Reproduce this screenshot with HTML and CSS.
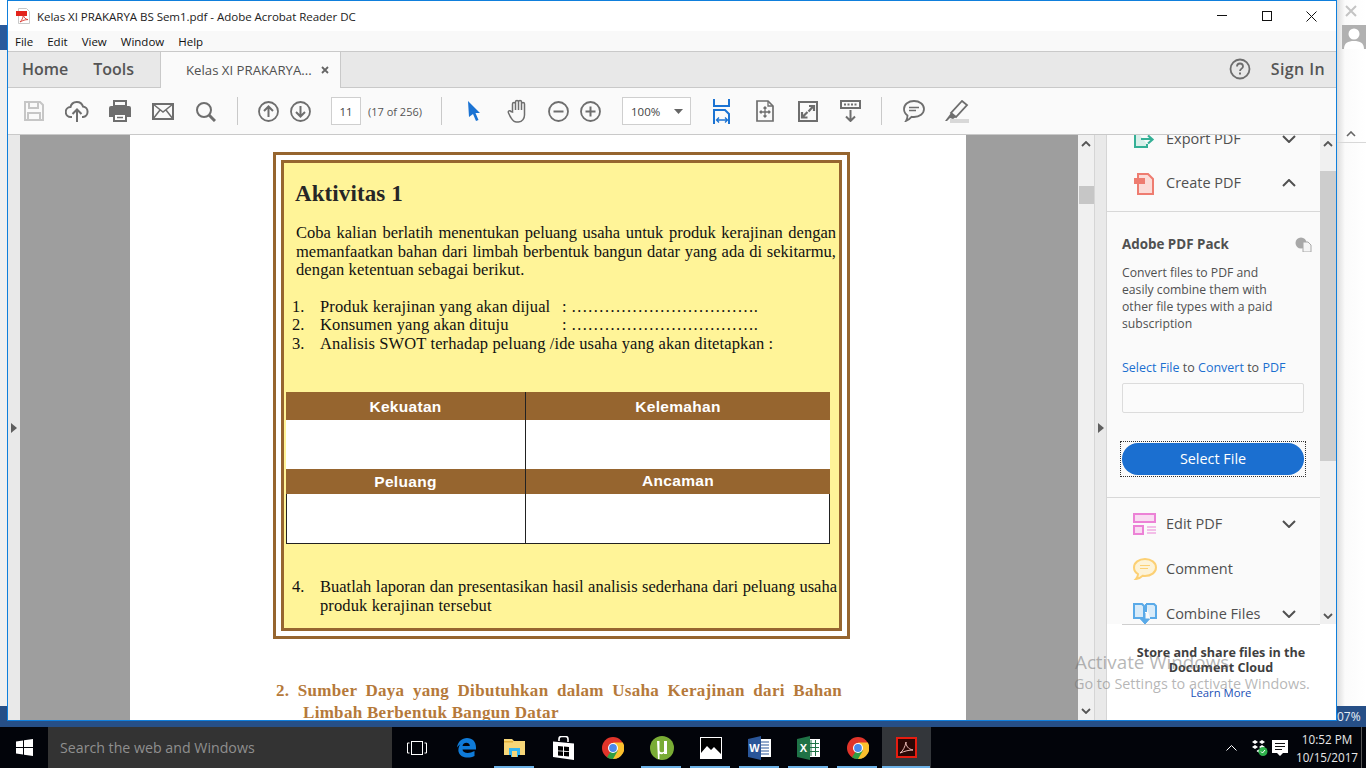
FILE: index.html
```html
<!DOCTYPE html>
<html lang="id">
<head>
<meta charset="utf-8">
<title>Kelas XI PRAKARYA BS Sem1.pdf - Adobe Acrobat Reader DC</title>
<link rel="stylesheet" href="styles.css">
</head>
<body>
<div class="screen">
  <div class="desktop">
    <div class="bg-left"><div class="bg-left-white"></div><div class="bg-left-blue"></div><div class="bg-left-gray"></div></div>
    <div class="bg-right">
      <svg class="bg-x" width="12" height="12" viewBox="0 0 12 12"><path d="M1 1l10 10M11 1L1 11" stroke="#c4c4c4" stroke-width="2"/></svg>
      <svg class="bg-avatar" width="24" height="24" viewBox="0 0 24 24"><rect width="24" height="24" fill="#b1b1b1"/><circle cx="12" cy="9" r="5.5" fill="#fff"/><path d="M2 24c0-6 4-8 10-8s10 2 10 8z" fill="#fff"/></svg>
      <svg class="bg-chev" width="10" height="6" viewBox="0 0 10 6"><path d="M1 5l4-4 4 4" fill="none" stroke="#666" stroke-width="1.6"/></svg>
      <div class="bg-line"></div>
    </div>
    <div class="bg-percent">07%</div>

    <div class="window">
      <div class="titlebar">
        <svg class="pdf-ico" width="16" height="16" viewBox="0 0 16 16"><path d="M2.500 .5h8l3 3v12h-11z" fill="#fff" stroke="#c9c9c9"/><rect x="0" y="3" width="11" height="5" fill="#e3231b"/><path d="M4 14c2-2 3-4 3.300-7 .8 3 2 4 4.700 4.600-3 0-5 .8-8 2.400z" fill="none" stroke="#d8362d" stroke-width=".9"/></svg>
        <span class="title-text">Kelas XI PRAKARYA BS Sem1.pdf - Adobe Acrobat Reader DC</span>
        <div class="win-btns">
          <svg width="10" height="2" viewBox="0 0 10 2"><rect width="10" height="1" fill="#111"/></svg>
          <svg width="10" height="10" viewBox="0 0 10 10"><rect x=".5" y=".5" width="9" height="9" fill="none" stroke="#111"/></svg>
          <svg width="11" height="11" viewBox="0 0 11 11"><path d="M.5 .5l10 10M10.500 .5l-10 10" stroke="#111"/></svg>
        </div>
      </div>
      <div class="menubar"><span>File</span><span>Edit</span><span>View</span><span>Window</span><span>Help</span></div>
      <div class="tabbar">
        <div class="tab-main"><span>Home</span><span>Tools</span></div>
        <div class="tab-doc"><span>Kelas XI PRAKARYA...</span>
          <svg width="8" height="8" viewBox="0 0 8 8"><path d="M1 1l6 6M7 1L1 7" stroke="#666" stroke-width="1.800"/></svg>
        </div>
        <div class="tab-right">
          <svg width="22" height="22" viewBox="0 0 22 22"><circle cx="11" cy="11" r="9.500" fill="none" stroke="#6e6e6e" stroke-width="1.800"/><path d="M8 8.500c0-4 6-4 6 0 0 2-3 2.300-3 4.500" fill="none" stroke="#6e6e6e" stroke-width="1.800"/><rect x="10" y="14.500" width="2" height="2" fill="#6e6e6e"/></svg>
          <span>Sign In</span>
        </div>
      </div>
      <div class="toolbar">
        <div class="tb"><svg width="22" height="22" viewBox="0 0 22 22"><path d="M2 2h15l3 3v15H2z" fill="none" stroke="#c6c6c6" stroke-width="2"/><path d="M6 2v6h9V2M5 20v-7h12v7" fill="none" stroke="#c6c6c6" stroke-width="2"/></svg></div>
        <div class="tb"><svg width="24" height="24" viewBox="0 0 24 24"><path d="M7 18H6a5 5 0 0 1-.5-10A6.500 6.500 0 0 1 18 7.500a5.300 5.300 0 0 1 0 10.500h-1" fill="none" stroke="#6e6e6e" stroke-width="2"/><path d="M12 23V11M7.500 15l4.500-4.500 4.500 4.500" fill="none" stroke="#6e6e6e" stroke-width="2"/></svg></div>
        <div class="tb"><svg width="24" height="22" viewBox="0 0 24 22"><path d="M6 1h12v5H6z" fill="none" stroke="#6e6e6e" stroke-width="2"/><path d="M3 6h18a2 2 0 0 1 2 2v9h-4v-4H5v4H1V8a2 2 0 0 1 2-2z" fill="#6e6e6e"/><path d="M6 14h12v7H6z" fill="#fff" stroke="#6e6e6e" stroke-width="2"/><path d="M9 17.500h6" stroke="#6e6e6e" stroke-width="1.500"/></svg></div>
        <div class="tb"><svg width="22" height="17" viewBox="0 0 22 17"><rect x="1" y="1" width="20" height="15" fill="none" stroke="#6e6e6e" stroke-width="2"/><path d="M1 1l10 8 10-8M1 16l7-9M21 16l-7-9" fill="none" stroke="#6e6e6e" stroke-width="1.500"/></svg></div>
        <div class="tb"><svg width="21" height="21" viewBox="0 0 21 21"><circle cx="9" cy="9" r="7" fill="none" stroke="#6e6e6e" stroke-width="2"/><path d="M14 14l6 6" stroke="#6e6e6e" stroke-width="3"/></svg></div>
        <div class="tb-sep sep-a"></div>
        <div class="tb-s first-nav"><svg width="21" height="21" viewBox="0 0 21 21"><circle cx="10.500" cy="10.500" r="9.500" fill="none" stroke="#6e6e6e" stroke-width="1.800"/><path d="M10.500 16V5.500M6 10l4.500-4.500L15 10" fill="none" stroke="#6e6e6e" stroke-width="2"/></svg></div>
        <div class="tb-s"><svg width="21" height="21" viewBox="0 0 21 21"><circle cx="10.500" cy="10.500" r="9.500" fill="none" stroke="#6e6e6e" stroke-width="1.800"/><path d="M10.500 5v10.500M6 11l4.500 4.500L15 11" fill="none" stroke="#6e6e6e" stroke-width="2"/></svg></div>
        <div class="page-input">11</div>
        <span class="page-of">(17 of 256)</span>
        <div class="tb-sep sep-b"></div>
        <div class="tb cursor"><svg width="14" height="20" viewBox="0 0 14 20"><path d="M1 0l12 12H8.500l3 7-2.500 1-3-7L2 16z" fill="#1b73d3"/></svg></div>
        <div class="tb hand"><svg width="22" height="24" viewBox="0 0 22 24"><path d="M5.500 13V5a1.500 1.500 0 0 1 3 0v6-8a1.500 1.500 0 0 1 3 0v8-8a1.500 1.500 0 0 1 3 0v8-6a1.500 1.500 0 0 1 3 0v11c0 3-2 7-6 7h-2c-3 0-4-2-6-5l-2-4c-1-2 1.500-3 2.500-1.500z" fill="none" stroke="#6e6e6e" stroke-width="1.500"/></svg></div>
        <div class="tb-s zoom-out"><svg width="21" height="21" viewBox="0 0 21 21"><circle cx="10.500" cy="10.500" r="9.500" fill="none" stroke="#6e6e6e" stroke-width="1.800"/><path d="M5.500 10.500h10" stroke="#6e6e6e" stroke-width="2"/></svg></div>
        <div class="tb-s"><svg width="21" height="21" viewBox="0 0 21 21"><circle cx="10.500" cy="10.500" r="9.500" fill="none" stroke="#6e6e6e" stroke-width="1.800"/><path d="M5.500 10.500h10M10.500 5.500v10" stroke="#6e6e6e" stroke-width="2"/></svg></div>
        <div class="zoom-select"><span>100%</span><svg width="9" height="5" viewBox="0 0 9 5"><path d="M0 0h9L4.500 5z" fill="#666"/></svg></div>
        <div class="tb fit"><svg width="18" height="25" viewBox="0 0 18 25"><path d="M1 0v7h15V0" fill="none" stroke="#1b73d3" stroke-width="2"/><path d="M1 25V11h11l4 4v10" fill="none" stroke="#1b73d3" stroke-width="2"/><path d="M3.500 21h11M6 18.500L3.500 21 6 23.500M12 18.500l2.500 2.500-2.500 2.500" fill="none" stroke="#1b73d3" stroke-width="1.300"/></svg></div>
        <div class="tb"><svg width="18" height="22" viewBox="0 0 18 22"><path d="M1 1h11l5 5v15H1z" fill="none" stroke="#6e6e6e" stroke-width="1.700"/><path d="M12 1v5h5" fill="none" stroke="#6e6e6e" stroke-width="1.300"/><path d="M9 7v10M4 12h10M7.500 8.500L9 7l1.500 1.500M7.500 15.500L9 17l1.500-1.500M5.500 10.500L4 12l1.500 1.500M12.500 10.500L14 12l-1.500 1.500" fill="none" stroke="#6e6e6e" stroke-width="1.300"/></svg></div>
        <div class="tb"><svg width="20" height="21" viewBox="0 0 20 21"><rect x="1" y="1" width="18" height="19" fill="none" stroke="#6e6e6e" stroke-width="2"/><path d="M10.500 10.500l4.500-5M11 5h5v5M9.500 11l-5 5M4 11v5.500h5.500" fill="none" stroke="#6e6e6e" stroke-width="2.200"/></svg></div>
        <div class="tb"><svg width="21" height="22" viewBox="0 0 21 22"><rect x="1" y="1" width="19" height="7" fill="none" stroke="#6e6e6e" stroke-width="2"/><path d="M4 4.500h13" stroke="#6e6e6e" stroke-width="2" stroke-dasharray="2 1.500"/><path d="M10.500 10v11M6 16.500l4.500 4.500 4.500-4.500" fill="none" stroke="#6e6e6e" stroke-width="2"/></svg></div>
        <div class="tb-sep sep-c"></div>
        <div class="tb comment"><svg width="22" height="22" viewBox="0 0 22 22"><path d="M11 1c5.500 0 10 3.400 10 8s-4.500 8-10 8c-1 0-1.500 0-2.500-.2C7 18.500 5.500 20 3 21c1-1.500 1.500-3 1.500-5.500C2.300 14 1 11.700 1 9c0-4.600 4.500-8 10-8z" fill="none" stroke="#6e6e6e" stroke-width="1.800"/><path d="M6 7.500h10M6 10.500h7" stroke="#6e6e6e" stroke-width="1.500"/></svg></div>
        <div class="tb"><svg width="24" height="23" viewBox="0 0 24 23"><path d="M17 1l5 4-11 12-5-4z" fill="none" stroke="#6e6e6e" stroke-width="1.800"/><path d="M6 13l5 4-3 2-3-1-3 3h-2l3-4z" fill="#6e6e6e"/><rect x="5" y="19" width="19" height="4" fill="#d8d8d8"/></svg></div>
      </div>

      <div class="content">
        <div class="nav-rail"><svg width="6" height="10" viewBox="0 0 6 10"><path d="M0 0l6 5-6 5z" fill="#5f5f5f"/></svg></div>
        <div class="doc-area">
          <div class="page">
            <div class="box-outer"><div class="box-inner">
              <h2 class="act-title">Aktivitas 1</h2>
              <div class="act-text">
                <p class="just tight">Coba kalian berlatih menentukan peluang usaha untuk produk kerajinan dengan</p>
                <p class="just tight">memanfaatkan bahan dari limbah berbentuk bangun datar yang ada di sekitarmu,</p>
                <p>dengan ketentuan sebagai berikut.</p>
              </div>
              <div class="act-list">
                <span>1.</span><span>Produk kerajinan yang akan dijual</span><span>: …………………………….</span>
                <span>2.</span><span>Konsumen yang akan dituju</span><span>: …………………………….</span>
                <span>3.</span><span class="span2">Analisis SWOT terhadap peluang /ide usaha yang akan ditetapkan :</span>
              </div>
              <div class="swot">
                <div class="sw-head sw-h1 sw-left">Kekuatan</div><div class="sw-head sw-h1">Kelemahan</div>
                <div class="sw-cell sw-c1 sw-left"></div><div class="sw-cell sw-c1"></div>
                <div class="sw-head sw-h2 sw-left sw-low">Peluang</div><div class="sw-head sw-h2">Ancaman</div>
                <div class="sw-cell sw-c2 sw-left"></div><div class="sw-cell sw-c2"></div>
              </div>
              <div class="act-list2">
                <span>4.</span><div><p class="just tight">Buatlah laporan dan presentasikan hasil analisis sederhana dari peluang usaha</p><p>produk kerajinan tersebut</p></div>
              </div>
            </div></div>
            <div class="section-head">
              <p class="just">2. Sumber Daya yang Dibutuhkan dalam Usaha Kerajinan dari Bahan</p>
              <p class="sec-2">Limbah Berbentuk Bangun Datar</p>
            </div>
          </div>
        </div>
        <div class="scroll-doc">
          <svg class="chev" width="10" height="6" viewBox="0 0 10 6"><path d="M1 5l4-4 4 4" fill="none" stroke="#555" stroke-width="1.800"/></svg>
          <div class="sd-thumb"></div>
          <svg class="chev sd-down" width="10" height="6" viewBox="0 0 10 6"><path d="M1 1l4 4 4-4" fill="none" stroke="#555" stroke-width="1.800"/></svg>
        </div>
        <div class="panel-rail"><svg width="6" height="10" viewBox="0 0 6 10"><path d="M0 0l6 5-6 5z" fill="#5f5f5f"/></svg></div>
        <div class="panel">
          <div class="panel-top">
            <div class="panel-scrollarea">
              <div class="panel-list">
                <div class="tool-row tool-export">
                  <svg width="22" height="22" viewBox="0 0 22 22"><path d="M2 1h12v6M2 1v18h12v-3" fill="#d9f0ea" stroke="#35b096" stroke-width="2"/><path d="M8 11h10M15 7.500l4.500 4-4.500 4" fill="none" stroke="#35b096" stroke-width="2.200"/></svg>
                  <span>Export PDF</span>
                  <svg class="caret" width="14" height="8" viewBox="0 0 14 8"><path d="M1 1l6 6 6-6" fill="none" stroke="#505050" stroke-width="2"/></svg>
                </div>
                <div class="tool-row tool-create">
                  <svg width="22" height="22" viewBox="0 0 22 22"><path d="M5 1h10l5 5v15H5z" fill="#fbdcd8" stroke="#ee7c70" stroke-width="2"/><rect x="1" y="5" width="11" height="6" fill="#ee7c70"/></svg>
                  <span>Create PDF</span>
                  <svg class="caret" width="14" height="8" viewBox="0 0 14 8"><path d="M1 7l6-6 6 6" fill="none" stroke="#505050" stroke-width="2"/></svg>
                </div>
                <div class="pack">
                  <div class="pack-head"><b>Adobe PDF Pack</b>
                    <svg width="17" height="15" viewBox="0 0 17 15"><circle cx="6" cy="6" r="5.500" fill="#a8a8a8"/><path d="M8 5h5l3 3v7H8z" fill="#f5f5f5" stroke="#a8a8a8"/></svg>
                  </div>
                  <p class="pack-text">Convert files to PDF and easily combine them with other file types with a paid subscription</p>
                  <p class="pack-select"><span class="lnk">Select File</span> to <span class="lnk">Convert</span> to <span class="lnk">PDF</span></p>
                  <div class="pack-input"></div>
                  <div class="focus-ring"><div class="select-btn">Select File</div></div>
                </div>
                <div class="tool-row tool-edit">
                  <svg width="24" height="22" viewBox="0 0 24 22"><rect x="1" y="1" width="21" height="8" fill="#f9dcf2" stroke="#ec82d6" stroke-width="2"/><rect x="1" y="13" width="9" height="8" fill="#f9dcf2" stroke="#ec82d6" stroke-width="2"/><path d="M14 14h9M14 17h9M14 20h9" stroke="#ec82d6" stroke-width="1.200"/></svg>
                  <span>Edit PDF</span>
                  <svg class="caret" width="14" height="8" viewBox="0 0 14 8"><path d="M1 1l6 6 6-6" fill="none" stroke="#505050" stroke-width="2"/></svg>
                </div>
                <div class="tool-row">
                  <svg width="24" height="22" viewBox="0 0 24 22"><path d="M12 1c6 0 11 3.400 11 8.500S18 18 12 18c-1 0-1.800 0-2.500-.2C8 19.500 6 20.500 3 21c1.500-1.500 2-3 2-5C2.500 14.500 1 12 1 9.500 1 4.400 6 1 12 1z" fill="#fdf3d8" stroke="#fcd074" stroke-width="2"/><path d="M7 7.500h10M7 10.500h8" stroke="#fcd074" stroke-width="1.200"/></svg>
                  <span>Comment</span>
                </div>
                <div class="tool-row">
                  <svg width="24" height="24" viewBox="0 0 24 24"><path d="M1 2h8l2 2v12H1zM13 2h8l2 2v12h-6M13 2v8" fill="#d8ebf9" stroke="#5aaae8" stroke-width="2"/><path d="M12 11v8M7.500 17l4.500 5 4.500-5z" fill="#5aaae8" stroke="#5aaae8"/></svg>
                  <span>Combine Files</span>
                  <svg class="caret" width="14" height="8" viewBox="0 0 14 8"><path d="M1 1l6 6 6-6" fill="none" stroke="#505050" stroke-width="2"/></svg>
                </div>
              </div>
            </div>
            <div class="scroll-panel">
              <svg class="chev" width="10" height="6" viewBox="0 0 10 6"><path d="M1 5l4-4 4 4" fill="none" stroke="#555" stroke-width="1.800"/></svg>
              <div class="sp-thumb"></div>
              <svg class="chev sp-down" width="10" height="6" viewBox="0 0 10 6"><path d="M1 1l4 4 4-4" fill="none" stroke="#555" stroke-width="1.800"/></svg>
            </div>
          </div>
          <div class="cloud">
            <b>Store and share files in the<br>Document Cloud</b>
            <span class="learn">Learn More</span>
          </div>
        </div>
      </div>
    </div>

    <div class="watermark"><div class="wm-1">Activate Windows</div><div class="wm-2">Go to Settings to activate Windows.</div></div>
  </div>

  <div class="taskbar">
    <div class="start"><svg width="17" height="17" viewBox="0 0 17 17"><path d="M0 2.400l7-1v6.600H0zM8 1.200L17 0v8H8zM0 9h7v6.600l-7-1zM8 9h9v8l-9-1.200z" fill="#fff"/></svg></div>
    <div class="search">Search the web and Windows</div>
    <div class="task-cell"><svg width="20" height="14" viewBox="0 0 20 14"><rect x="4.500" y=".5" width="11" height="13" fill="none" stroke="#fff"/><path d="M2.500 2H.5v10h2M17.500 2h2v10h-2" fill="none" stroke="#fff"/></svg></div>
    <div class="task-cell"><svg width="20" height="20" viewBox="0 0 20 20"><path d="M1 9.500C2 3.500 6 0 11 0c5.500 0 9 3.700 9 9.500v2H6.500c.3 3.500 6 4.800 12 1.500v5c-6 3-14.500 2-16-4.500C2 11 3 8 4.500 6c-1 1-2.500 2-3.500 3.500zM6.500 8h7.300c0-4-6.500-4.500-7.300 0z" fill="#0f7bd8"/></svg></div>
    <div class="task-cell on-part"><svg width="21" height="19" viewBox="0 0 21 19"><path d="M0 1h8l2 2h11v14H0z" fill="#f6d678"/><rect x="0" y="3" width="9" height="1.500" fill="#e2b23e"/><path d="M5 10h11v7h-2v2H7v-2H5z" fill="#33b4f0"/><rect x="8" y="13" width="5" height="6" fill="#f6d678"/></svg></div>
    <div class="task-cell"><svg width="21" height="24" viewBox="0 0 21 24"><path d="M0 5.500L21 7.500V24L0 21z" fill="#fff"/><path d="M6 5V3a2.500 2.500 0 0 1 2.500-2.500h4A2.500 2.500 0 0 1 15 3v3" fill="none" stroke="#fff" stroke-width="1.600"/><path d="M5 10l5 .4v4.300l-5-.3zM11 10.500l5 .5v4.200l-5-.4zM5 15.300l5 .3V20l-5-.5zM11 15.700l5 .4v4.400l-5-.5z" fill="#000"/></svg></div>
    <div class="task-cell"><svg width="22" height="22" viewBox="0 0 22 22"><circle cx="11" cy="11" r="11" fill="#e0342a"/><path d="M11 11L20.500 16.500A11 11 0 0 1 5 20.300z" fill="#2f9e44"/><path d="M11 5.500h9.800A11 11 0 0 1 11 22l4.800-8.200z" fill="#fbc02d"/><circle cx="11" cy="11" r="5" fill="#fff"/><circle cx="11" cy="11" r="3.900" fill="#4a88ea"/></svg></div>
    <div class="task-cell on"><svg width="24" height="24" viewBox="0 0 24 24"><circle cx="12" cy="12" r="12" fill="#79ac35"/><path d="M7 5h2.500v9c0 2.500 2.500 3 4.500 1.500V5h3v13h-3v-1c-1.500 1.300-3 1.500-4.500.7V23H8z" fill="#fff"/></svg></div>
    <div class="task-cell on"><svg width="22" height="22" viewBox="0 0 22 22"><rect width="22" height="22" fill="#fff"/><rect x="1" y="1" width="20" height="20" fill="#000"/><path d="M1 21v-5l6-7 4 4 3-3 7 7v4z" fill="#fff"/><rect y="21" width="22" height="1" fill="#fff"/></svg></div>
    <div class="task-cell on"><svg width="23" height="24" viewBox="0 0 23 24"><rect x="9" y="3" width="14" height="18" fill="#fff"/><path d="M13 6h8M13 9h8M13 12h8M13 15h8M13 18h8" stroke="#2a5699" stroke-width="1.200"/><path d="M0 3l13-3v24L0 21z" fill="#2a5699"/><text x="6.500" y="16" class="ti-letter">W</text></svg></div>
    <div class="task-cell on"><svg width="23" height="24" viewBox="0 0 23 24"><rect x="9" y="3" width="14" height="18" fill="#fff"/><path d="M14 4v16M18.500 4v16M11 7.500h11M11 11.500h11M11 15.500h11" stroke="#1f7246" stroke-width="1"/><path d="M0 3l13-3v24L0 21z" fill="#1f7246"/><text x="6.500" y="16" class="ti-letter">X</text></svg></div>
    <div class="task-cell on"><svg width="22" height="22" viewBox="0 0 22 22"><circle cx="11" cy="11" r="11" fill="#e0342a"/><path d="M11 11L20.500 16.500A11 11 0 0 1 5 20.300z" fill="#2f9e44"/><path d="M11 5.500h9.800A11 11 0 0 1 11 22l4.800-8.200z" fill="#fbc02d"/><circle cx="11" cy="11" r="5" fill="#fff"/><circle cx="11" cy="11" r="3.900" fill="#4a88ea"/></svg></div>
    <div class="task-cell active"><svg width="21" height="21" viewBox="0 0 21 21"><rect x="1" y="1" width="19" height="19" fill="#2a0705" stroke="#e61c10" stroke-width="2"/><path d="M4 16c3-2 5-6 6-11 0 4 2 7 7 8-4 0-8 1-13 3z" fill="none" stroke="#e9b9b4" stroke-width="1"/></svg></div>
    <div class="tray">
      <svg width="11" height="6" viewBox="0 0 11 6"><path d="M.5 5.500l5-5 5 5" fill="none" stroke="#fff"/></svg>
      <svg class="tray-box" width="16" height="16" viewBox="0 0 16 16"><path d="M3 0l3 2-3 2-3-2zM10 0l3 2-3 2-3-2zM3 5l3 2-3 2-3-2zM10 5l3 2-3 2-3-2zM6.500 9.500l2 1.500-2 1.500-2-1.500z" fill="#fff"/><circle cx="11" cy="11.500" r="4.500" fill="#2eb14b"/><path d="M9 11.500l1.500 1.500 2.500-3" fill="none" stroke="#fff"/></svg>
      <svg class="tray-msg" width="16" height="16" viewBox="0 0 16 16"><path d="M0 0h16v13h-5l-3 3-3-3H0z" fill="#fff"/><path d="M3 3.500h10M3 6.500h10M3 9.500h7" stroke="#111"/></svg>
      <div class="clock"><span>10:52 PM</span><span>10/15/2017</span></div>
      <div class="show-desktop"></div>
    </div>
  </div>
</div>
</body>
</html>
```
FILE: styles.css
```css
* { box-sizing: border-box; }
html, body { margin: 0; padding: 0; }
body { width: 1366px; height: 768px; overflow: hidden; background: #fff; font-family: "Open Sans", "Noto Sans", sans-serif; }
p, h2 { margin: 0; }
svg { display: block; flex: none; }

.screen { display: grid; grid-template-rows: 727px 41px; width: 1366px; height: 768px; }
.desktop { position: relative; background: #264f87; overflow: hidden; }

.bg-left { position: absolute; left: 0; top: 0; width: 7px; height: 706px; display: flex; flex-direction: column; }
.bg-left-white { height: 25px; background: #fff; }
.bg-left-blue { height: 25px; background: #2a5a9c; }
.bg-left-gray { flex: 1; background: #f0f0f0; }
.bg-right { position: absolute; left: 1337px; top: 0; width: 29px; height: 706px; background: linear-gradient(90deg, #dcdcdc, #fbfbfb 8px, #fff); }
.bg-x { position: absolute; left: 8px; top: 5px; }
.bg-avatar { position: absolute; left: 5px; top: 25px; }
.bg-chev { position: absolute; left: 9px; top: 131px; }
.bg-line { position: absolute; left: 0; right: 0; top: 142px; height: 1px; background: #d8d8d8; }
.bg-percent { position: absolute; left: 1337px; top: 710px; font-size: 12px; line-height: 14px; color: #e8eef6; }

.window { position: absolute; left: 7px; top: 0; width: 1330px; height: 721px; border: 1px solid #0f7fdc; background: #fff; display: flex; flex-direction: column; overflow: hidden; }

.titlebar { height: 30px; flex: none; display: flex; align-items: center; padding-left: 8px; background: #fff; }
.pdf-ico { margin-right: 5px; }
.title-text { font-size: 11.55px; color: #222; letter-spacing: -.05px; white-space: nowrap; }
.win-btns { margin-left: auto; display: grid; grid-template-columns: repeat(3, 45px); justify-items: center; align-items: center; margin-right: 2px; }

.menubar { height: 20px; flex: none; background: #f9f9f9; display: flex; align-items: center; padding-left: 7px; gap: 14px; font-size: 11.5px; color: #111; }

.tabbar { height: 37px; flex: none; background: #e8e8e8; border-top: 1px solid #c9c9c9; border-bottom: 1px solid #c9c9c9; display: flex; align-items: stretch; }
.tab-main { width: 152px; display: flex; align-items: center; padding: 0 0 2px 14px; gap: 25px; font-size: 16px; font-weight: 600; color: #555; }
.tab-doc { width: 181px; margin-bottom: -1px; background: #fafafa; border-left: 1px solid #c9c9c9; border-right: 1px solid #c9c9c9; display: flex; align-items: center; padding-left: 25px; font-size: 13.2px; color: #505050; gap: 9px; white-space: nowrap; }
.tab-right { margin-left: auto; display: flex; align-items: center; gap: 20px; padding: 0 11px 2px 0; font-size: 16px; letter-spacing: .4px; font-weight: 600; color: #555; }

.toolbar { height: 47px; flex: none; background: #fafafa; border-bottom: 1px solid #c9c9c9; display: flex; align-items: center; padding-left: 4px; }
.tb { width: 43px; display: flex; justify-content: center; align-items: center; flex: none; }
.tb-s { width: 32px; display: flex; justify-content: center; align-items: center; flex: none; }
.tb-sep { width: 1px; height: 28px; background: #c9c9c9; flex: none; }
.sep-a { margin-left: 10px; }
.first-nav { margin-left: 14px; }
.page-input { width: 30px; height: 28px; margin-left: 15px; border: 1px solid #cfcfcf; background: #fff; font-size: 11.5px; color: #444; display: flex; align-items: center; justify-content: center; flex: none; }
.page-of { margin-left: 7px; font-size: 11px; color: #555; white-space: nowrap; width: 54px; flex: none; }
.sep-b { margin-left: 19px; }
.cursor { margin-left: 10px; }
.hand { margin-left: 1px; }
.zoom-out { margin-left: 3px; }
.zoom-select { width: 69px; height: 28px; margin-left: 16px; border: 1px solid #cfcfcf; background: #fff; font-size: 11.5px; color: #444; display: flex; align-items: center; justify-content: space-between; padding: 0 7px 0 8px; flex: none; }
.fit { margin-left: 9px; }
.sep-c { margin-left: 9px; }
.comment { margin-left: 10px; }

.content { flex: 1; min-height: 0; display: flex; background: #fff; }
.nav-rail { width: 12px; flex: none; background: #e9e9e9; display: flex; align-items: center; justify-content: center; }
.doc-area { width: 1058px; flex: none; background: #9e9e9e; overflow: hidden; display: flex; padding-left: 110px; }
.page { width: 836px; height: 585px; flex: none; background: #fff; padding: 17px 0 0 143px; }

.box-outer { width: 577px; height: 487px; border: 3px solid #96652f; padding: 5px; background: #fff; }
.box-inner { height: 471px; border: 3px solid #96652f; background: #fff498; padding: 17px 2px 0 3px; font-family: "Liberation Serif", serif; color: #111; }
.act-title { font-size: 23px; line-height: 28px; font-weight: 700; padding-left: 8px; color: #262626; letter-spacing: .1px; }
.act-text { margin: 16px 1px 0 9px; font-size: 16.5px; letter-spacing: .12px; line-height: 18.5px; }
.just { text-align: justify; text-align-last: justify; }
.tight { letter-spacing: 0; word-spacing: -1.3px; }
.act-list { margin: 18px 0 0 5px; display: grid; grid-template-columns: 28px 242px auto; font-size: 16.5px; letter-spacing: .12px; line-height: 18.5px; }
.span2 { grid-column: span 2; }
.swot { margin: 39px 0 0 -1px; display: grid; grid-template-columns: 240px 304px; grid-template-rows: 28px 49px 25px 50px; width: 544px; font-family: "Liberation Sans", sans-serif; }
.sw-head { background: #96652f; color: #fff; font-weight: 700; font-size: 15.5px; letter-spacing: .3px; text-align: center; line-height: 29px; }
.sw-h2 { line-height: 24px; }
.sw-low { line-height: 26px; }
.sw-left { border-right: 1px solid #222; }
.sw-cell { background: #fff; }
.sw-c2 { border-bottom: 1px solid #222; }
.sw-c2.sw-left { border-left: 1px solid #222; }
.sw-c2:not(.sw-left) { border-right: 1px solid #222; }
.act-list2 { margin: 34px 0 0 5px; display: grid; grid-template-columns: 28px 517px; font-size: 16.5px; letter-spacing: .12px; line-height: 18.5px; }

.section-head { width: 566px; margin: 41px 0 0 3px; font-family: "Liberation Serif", serif; font-weight: 700; font-size: 17px; line-height: 22px; color: #b5793a; letter-spacing: .3px; }
.sec-2 { padding-left: 27px; }

.scroll-doc { width: 17px; flex: none; background: #f0f0f0; border-right: 1px solid #d5d5d5; display: flex; flex-direction: column; align-items: center; padding-top: 6px; }
.chev { flex: none; }
.sd-thumb { width: 15px; height: 18px; background: #c6c6c6; margin-top: 39px; }
.sd-down { margin-top: auto; margin-bottom: 6px; }
.panel-rail { width: 12px; flex: none; background: #e9e9e9; border-right: 1px solid #d5d5d5; display: flex; align-items: center; justify-content: center; }

.panel { flex: 1; min-width: 0; display: flex; flex-direction: column; background: #fff; }
.panel-top { height: 489px; flex: none; display: flex; background: #fafafa; position: relative; }
.panel-scrollarea { width: 213px; flex: none; overflow: hidden; position: relative; }
.panel-list { margin-top: -19px; }
.tool-row { height: 45px; display: flex; align-items: center; padding-left: 26px; color: #505050; font-size: 14.5px; position: relative; }
.tool-create { height: 50px; padding-bottom: 5px; }
.tool-create > span { top: 12px; }
.tool-create .caret { top: 18px; }
.tool-row > span { position: absolute; left: 59px; }
.tool-row .caret { position: absolute; left: 175px; }
.pack { border-top: 1px solid #d8d8d8; border-bottom: 1px solid #d8d8d8; height: 287px; padding: 22px 0 0 15px; }
.pack-head { display: flex; justify-content: space-between; align-items: center; width: 190px; font-size: 13.4px; color: #505050; height: 20px; }
.pack-text { margin-top: 10px; width: 160px; font-size: 12.2px; line-height: 17px; color: #505050; }
.pack-select { margin-top: 27px; font-size: 12.5px; line-height: 17px; color: #505050; white-space: nowrap; }
.lnk { color: #1b6fd0; }
.pack-input { margin-top: 7px; width: 182px; height: 30px; background: #fbfbfb; border: 1px solid #dcdcdc; border-radius: 2px; }
.focus-ring { margin: 28px 0 0 -2px; width: 186px; height: 36px; border: 1px dotted #333; padding: 1px; }
.select-btn { height: 32px; background: #1b6fd0; border-radius: 16px; color: #fff; font-size: 14.4px; text-align: center; line-height: 31px; }
.tool-edit { margin-top: 3px; }

.scroll-panel { width: 16px; flex: none; background: #f0f0f0; display: flex; flex-direction: column; align-items: center; padding-top: 6px; }
.sp-thumb { width: 16px; height: 290px; background: #cdcdcd; margin-top: 24px; }
.sp-down { margin-top: auto; margin-bottom: 5px; }

.cloud { flex: 1; background: #fff; margin-left: 15px; border-top: 1px solid #cfcfcf; margin-right: 16px; text-align: center; padding-top: 20px; font-size: 12.6px; line-height: 15px; color: #3f3f3f; display: flex; flex-direction: column; align-items: center; }
.learn { margin-top: 10px; font-size: 11.3px; color: #1a4fb5; }

.watermark { position: absolute; left: 1075px; top: 650px; color: rgba(110,110,110,.5); pointer-events: none; white-space: nowrap; }
.wm-1 { font-size: 18.8px; line-height: 24px; }
.wm-2 { font-size: 14.4px; line-height: 20px; margin-left: -1px; }

.taskbar { background: #02040a; display: flex; align-items: stretch; color: #fff; }
.start { width: 48px; flex: none; display: flex; align-items: center; justify-content: center; }
.search { width: 344px; flex: none; background: #333333; color: #8f8f8f; font-size: 14.2px; display: flex; align-items: center; padding-left: 12px; }
.task-cell { width: 49px; flex: none; display: flex; align-items: center; justify-content: center; position: relative; }
.task-cell.on::after, .task-cell.on-part::after { content: ""; position: absolute; left: 4px; right: 5px; bottom: 0; height: 2px; background: #6cb1e6; }
.task-cell.active { background: #33363a; }
.task-cell.active::after { content: ""; position: absolute; left: 0; right: 1px; bottom: 0; height: 2px; background: #6cb1e6; }
.ti-letter { font-family: "Liberation Sans", sans-serif; font-size: 11px; font-weight: 700; fill: #fff; text-anchor: middle; }
.tray { flex: 1; position: relative; display: flex; align-items: center; min-width: 0; }
.tray > svg:first-child { margin-left: 295px; }
.tray-box { margin-left: 15px; }
.tray-msg { margin-left: 4px; }
.clock { margin-left: 9px; width: 60px; flex: none; display: flex; flex-direction: column; align-items: center; font-size: 11.7px; line-height: 18px; color: #e8e8e8; white-space: nowrap; }
.show-desktop { position: absolute; right: 4px; top: 0; bottom: 0; width: 1px; background: #555; }
```
